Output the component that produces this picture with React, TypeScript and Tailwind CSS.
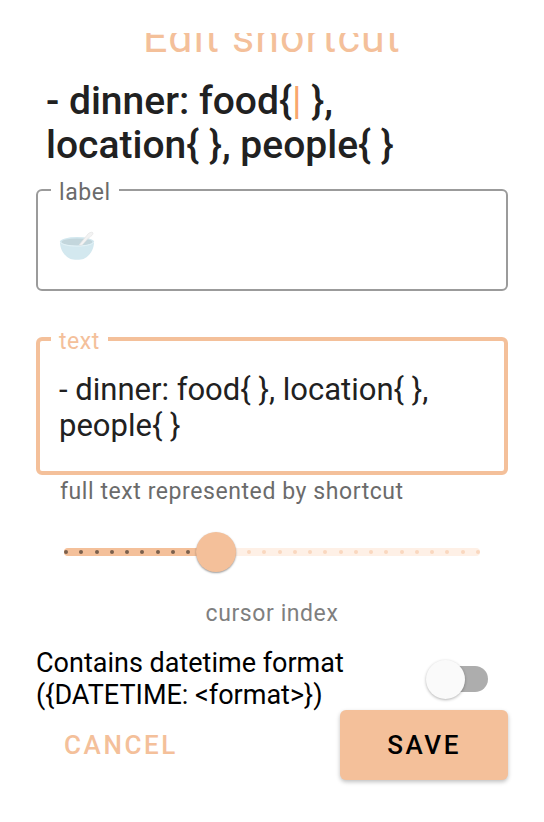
import { useState } from "react";

const TICKS = 28;
const MAX = 41;

function BowlIcon() {
  return (
    <svg viewBox="0 0 36 30" className="h-[30px] w-9 shrink-0" aria-hidden="true">
      <ellipse cx="18" cy="10.5" rx="17" ry="4.4" fill="#d3e8ef" />
      <ellipse cx="18" cy="11" rx="15.400" ry="3.4" fill="#c3d6dc" />
      <path d="M1 10.500 C1.4 13 8 15 18 15 C28 15 34.6 13 35 10.500 C35.2 19 30 25.600 24.500 28 C22 28.900 14 28.900 11.500 28 C6 25.600 0.800 19 1 10.500 Z" fill="#d3e8ef" />
      <path d="M1.200 11 C3 13.900 10 15.200 18 15.200 C26 15.200 33 13.900 34.800 11" fill="none" stroke="#e1f1f6" strokeWidth="1" />
      <path d="M20 14 L28 4.200 C29.400 1.800 32.500 0.600 33.700 1.600 C34.6 2.600 33 5.2 30.4 6.1 L23 14.2 Z" fill="#f3f3f3" stroke="#e0e0e0" strokeWidth="0.6" />
    </svg>
  );
}

export default function App() {
  const [label, setLabel] = useState("");
  const [text, setText] = useState("- dinner: food{\u00a0}, location{\u00a0}, people{\u00a0}");
  const [cursor, setCursor] = useState(15);
  const [datetime, setDatetime] = useState(false);
  const percent = (cursor / MAX) * 100;

  return (
    <main className="min-h-screen bg-white px-9 pt-[33px] pb-10 font-['Roboto',sans-serif] text-[#212121]">
      <div className="flex h-5 flex-col justify-end overflow-hidden">
        <h1 className="shrink-0 text-center text-[43px] leading-8 tracking-wide text-[#f4c09a]">Edit shortcut</h1>
      </div>

      <p className="mt-[26px] px-[10px] text-[39px] leading-[44px] font-medium">
        - dinner: food{"{"}
        <span className="font-normal text-[#f9a66c]">|</span>
        {"\u00a0}, location{\u00a0}, people{\u00a0}"}
      </p>

      <fieldset className="mt-2 w-full min-w-0 rounded-md border-2 border-[#9b9b9b] px-[13px] pb-7">
        <legend className="px-2 pt-[6px] text-[23px] leading-6 tracking-wide text-[#6b6b6b]">
          <label htmlFor="label">label</label>
        </legend>
        <div className="flex h-14 items-end pl-2">
          <BowlIcon />
          <input
            id="label"
            value={label}
            onChange={(e) => setLabel(e.target.value)}
            className="h-9 w-full min-w-0 bg-transparent text-[31px] outline-none"
          />
        </div>
      </fieldset>

      <fieldset className="mt-[33px] w-full min-w-0 rounded-md border-4 border-[#f4c09a] px-[11px] pb-[27px]">
        <legend className="px-2 pt-[6px] text-[23px] leading-6 tracking-wide text-[#f4c09a]">
          <label htmlFor="text">text</label>
        </legend>
        <textarea
          id="text"
          rows={2}
          value={text}
          onChange={(e) => setText(e.target.value)}
          aria-describedby="text-help"
          className="mt-[18px] block w-full resize-none overflow-hidden bg-transparent px-2 text-[31px] leading-9 outline-none"
        />
      </fieldset>
      <p id="text-help" className="mt-[3px] px-6 text-[23px] leading-7 tracking-wide text-[#6b6b6b]">
        full text represented by shortcut
      </p>

      <div className="relative mx-7 mt-[26px] flex h-10 items-center">
        <div className="flex h-2 w-full items-center overflow-hidden rounded-full bg-[#fef0e6]">
          <div className="h-full bg-[#f4c09a]" style={{ width: `${percent}%` }} />
        </div>
        <div className="absolute inset-x-0 flex justify-between">
          {Array.from({ length: TICKS }, (_, i) => (
            <span
              key={i}
              className={
                (i / (TICKS - 1)) * 100 <= percent
                  ? "size-1 rounded-full bg-[#7a604d]"
                  : "size-1 rounded-full bg-[#fad7bf]"
              }
            />
          ))}
        </div>
        <div
          className="absolute size-10 -translate-x-1/2 rounded-full bg-[#f4c09a] shadow-[0_1px_2px_rgba(0,0,0,0.4)]"
          style={{ left: `${percent}%` }}
        />
        <input
          id="cursor"
          type="range"
          min={0}
          max={MAX}
          value={cursor}
          onChange={(e) => setCursor(Number(e.target.value))}
          className="absolute inset-0 h-full w-full opacity-0"
        />
      </div>
      <label htmlFor="cursor" className="mt-7 block text-center text-[23px] leading-7 tracking-wide text-[#7f7f7f]">
        cursor index
      </label>

      <div className="mt-5 flex h-[62px] items-center justify-between pr-5">
        <label htmlFor="datetime" className="text-[27px] leading-8 text-black">
          Contains datetime format
          <br />
          {"({DATETIME: <format>})"}
        </label>
        <input
          id="datetime"
          type="checkbox"
          role="switch"
          checked={datetime}
          onChange={(e) => setDatetime(e.target.checked)}
          className="flex h-[26px] w-[54px] appearance-none items-center rounded-full bg-[#adadad] before:-ml-2 before:size-[39px] before:shrink-0 before:rounded-full before:bg-[#fafafa] before:shadow-[0_1px_3px_rgba(0,0,0,0.3)] checked:bg-[#f4c09a] checked:before:ml-6"
        />
      </div>

      <div className="flex items-center justify-between pl-7">
        <button type="button" className="text-[26px] leading-8 font-medium tracking-widest text-[#f4c09a]">
          CANCEL
        </button>
        <button
          type="button"
          className="h-[70px] rounded-md bg-[#f4c09a] px-[47px] text-[26px] font-medium tracking-widest text-black shadow-[0_2px_4px_rgba(0,0,0,0.25)]"
        >
          SAVE
        </button>
      </div>
    </main>
  );
}
